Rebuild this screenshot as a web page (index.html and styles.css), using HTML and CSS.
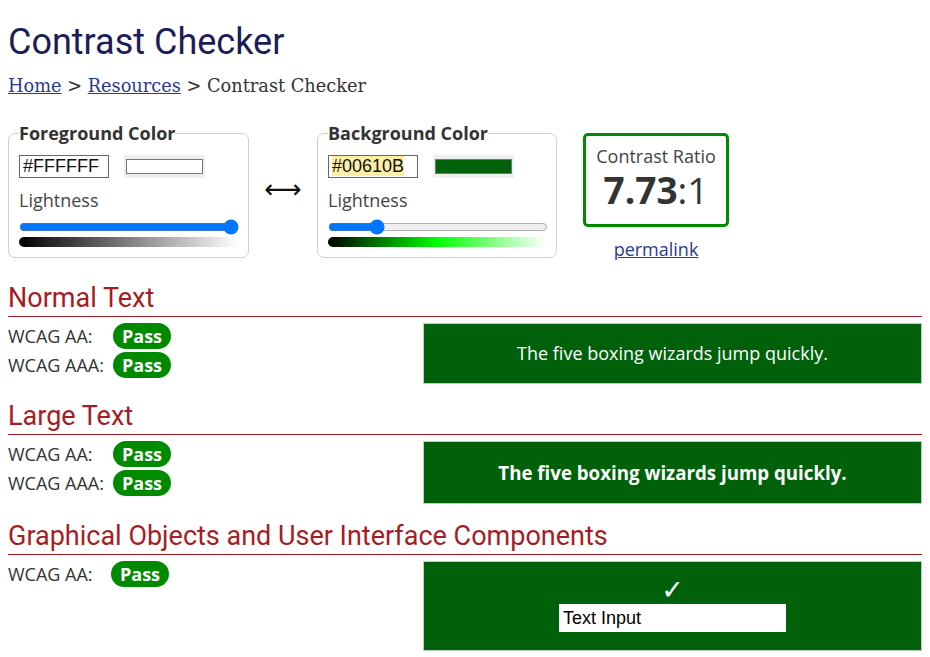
FILE: index.html
```html
<!DOCTYPE html>
<html lang="en">
<head>
<meta charset="utf-8">
<title>Contrast Checker</title>
<link rel="stylesheet" href="styles.css">
</head>
<body>
<h1 class="title">Contrast Checker</h1>
<nav class="crumbs"><a href="#">Home</a> &gt; <a href="#">Resources</a> &gt; Contrast Checker</nav>

<div class="tools">
  <fieldset class="picker">
    <legend>Foreground Color</legend>
    <div class="hexrow">
      <div class="hex">#FFFFFF</div>
      <div class="swatch"><div class="swatch-in white"></div></div>
    </div>
    <div class="label">Lightness</div>
    <input class="range" type="range" min="0" max="100" value="100">
    <div class="grad grad-fg"></div>
  </fieldset>
  <div class="arrow">&#x27F7;</div>
  <fieldset class="picker picker-bg">
    <legend>Background Color</legend>
    <div class="hexrow">
      <div class="hex"><span class="hl">#00610B</span></div>
      <div class="swatch"><div class="swatch-in green"></div></div>
    </div>
    <div class="label">Lightness</div>
    <input class="range" type="range" min="0" max="100" value="20">
    <div class="grad grad-bg"></div>
  </fieldset>
  <div class="ratio-col">
    <div class="ratio">
      <div class="ratio-label">Contrast Ratio</div>
      <div class="ratio-val"><b>7.73</b>:1</div>
    </div>
    <a class="permalink" href="#">permalink</a>
  </div>
</div>

<h2 class="sec sec-first">Normal Text</h2>
<div class="result">
  <div class="checks">
    <div class="check"><span class="lvl">WCAG AA:</span><span class="pass">Pass</span></div>
    <div class="check"><span class="lvl">WCAG AAA:</span><span class="pass">Pass</span></div>
  </div>
  <div class="sample sample-normal">The five boxing wizards jump quickly.</div>
</div>

<h2 class="sec">Large Text</h2>
<div class="result">
  <div class="checks">
    <div class="check"><span class="lvl">WCAG AA:</span><span class="pass">Pass</span></div>
    <div class="check"><span class="lvl">WCAG AAA:</span><span class="pass">Pass</span></div>
  </div>
  <div class="sample sample-large">The five boxing wizards jump quickly.</div>
</div>

<h2 class="sec">Graphical Objects and User Interface Components</h2>
<div class="result">
  <div class="checks">
    <div class="check"><span class="lvl lvl-short">WCAG AA:</span><span class="pass">Pass</span></div>
  </div>
  <div class="sample sample-ui">
    <div class="tick">&#x2713;</div>
    <div class="textinput">Text Input</div>
  </div>
</div>
</body>
</html>
```
FILE: styles.css
```css
body {
  margin: 8px;
  font-family: "Open Sans", sans-serif;
  color: #333;
  background: #fff;
}
.title {
  font-family: Roboto, sans-serif;
  font-weight: 400;
  font-size: 36px;
  line-height: 40px;
  color: #1c1c58;
  margin: 14px 0 0 0;
}
.crumbs {
  font-family: "DejaVu Serif", serif;
  font-size: 17.75px;
  line-height: 24px;
  color: #333;
  margin-top: 12px;
}
.crumbs a { color: #2a3a8c; }

.tools {
  display: flex;
  align-items: flex-start;
  margin-top: 23px;
}
.picker {
  margin: 0;
  width: 241px;
  box-sizing: border-box;
  border: 1px solid #cfcfcf;
  border-radius: 7px;
  padding: 10px 10px 10px 10px;
  min-inline-size: 0;
}
.picker-bg { width: 240px; }
.picker legend {
  padding: 0;
  font-weight: 700;
  font-size: 18px;
  line-height: 24px;
  color: #333;
}
.hexrow {
  display: flex;
  gap: 15px;
  align-items: center;
}
.hex {
  width: 90px;
  height: 23px;
  box-sizing: border-box;
  border: 1px solid #666;
  font-family: "Liberation Sans", Arial, sans-serif;
  font-size: 18px;
  line-height: 21px;
  padding-left: 3px;
  color: #111;
}
.hl { background: #fdf0a6; }
.swatch {
  width: 81px;
  height: 23px;
  box-sizing: border-box;
  background: #efefef;
  padding: 4px 2px;
}
.swatch-in {
  height: 100%;
  box-sizing: border-box;
  border: 1px solid #777;
}
.swatch-in.white { background: #fff; }
.swatch-in.green { background: #00610b; }
.label {
  font-size: 18px;
  line-height: 24px;
  color: #444;
  margin-top: 10px;
}
.range {
  display: block;
  width: 220px;
  margin: 7px 0 0 0;
  height: 16px;
}
.grad {
  height: 10px;
  margin-top: 2px;
  border-radius: 5px 0 0 5px;
}
.grad-fg { background: linear-gradient(to right, #000, #fff); }
.grad-bg { background: linear-gradient(to right, #000, #00ff00 50%, #fff); }
.arrow {
  width: 68px;
  text-align: center;
  font-size: 26px;
  line-height: 30px;
  color: #111;
  margin-top: 53px;
  font-family: "DejaVu Sans", sans-serif;
}
.ratio-col {
  margin-left: 26px;
  margin-top: 12px;
  display: flex;
  flex-direction: column;
  align-items: center;
}
.ratio {
  width: 146px;
  height: 94px;
  box-sizing: border-box;
  border: 3px solid #008a00;
  border-radius: 5px;
  text-align: center;
  padding-top: 9px;
}
.ratio-label {
  font-size: 18px;
  line-height: 22px;
  color: #444;
}
.ratio-val {
  font-size: 37px;
  line-height: 46px;
  color: #333;
}
.ratio-val b { font-weight: 700; }
.permalink {
  margin-top: 10px;
  font-size: 18px;
  line-height: 24px;
  color: #2a3a8c;
}

.sec {
  font-family: Roboto, sans-serif;
  font-weight: 400;
  font-size: 27px;
  line-height: 30px;
  color: #a51d24;
  margin: 0;
  padding-bottom: 3px;
  border-bottom: 1px solid #a51d24;
  margin-top: 17px;
}
.sec-first { margin-top: 22px; }
.result {
  display: grid;
  grid-template-columns: 415px 1fr;
  margin-top: 6px;
}
.checks {
  display: flex;
  flex-direction: column;
  gap: 3px;
}
.check {
  display: flex;
  align-items: center;
  height: 26px;
}
.lvl {
  width: 105px;
  font-size: 18px;
  line-height: 24px;
  color: #333;
}
.lvl-short { width: 103px; }
.pass {
  background: #008a00;
  color: #fff;
  font-weight: 700;
  font-size: 18px;
  line-height: 26px;
  border-radius: 13px;
  padding: 0 9px;
}
.sample {
  background: #00610b;
  border: 1px solid #b9cfb9;
  color: #fff;
  text-align: center;
}
.sample-normal {
  font-size: 18px;
  line-height: 25px;
  padding: 17px 0;
}
.sample-large {
  font-size: 18.7px;
  font-weight: 700;
  line-height: 27px;
  padding: 17px 0;
}
.sample-ui {
  height: 90px;
  box-sizing: border-box;
  display: flex;
  flex-direction: column;
  align-items: center;
  padding-top: 14px;
}
.tick {
  font-family: "DejaVu Sans", sans-serif;
  font-size: 27px;
  line-height: 28px;
  color: #fff;
}
.textinput {
  width: 227px;
  height: 28px;
  background: #fff;
  color: #000;
  text-align: left;
  font-family: "Liberation Sans", Arial, sans-serif;
  font-size: 18px;
  line-height: 28px;
  padding-left: 4px;
  box-sizing: border-box;
}
```
